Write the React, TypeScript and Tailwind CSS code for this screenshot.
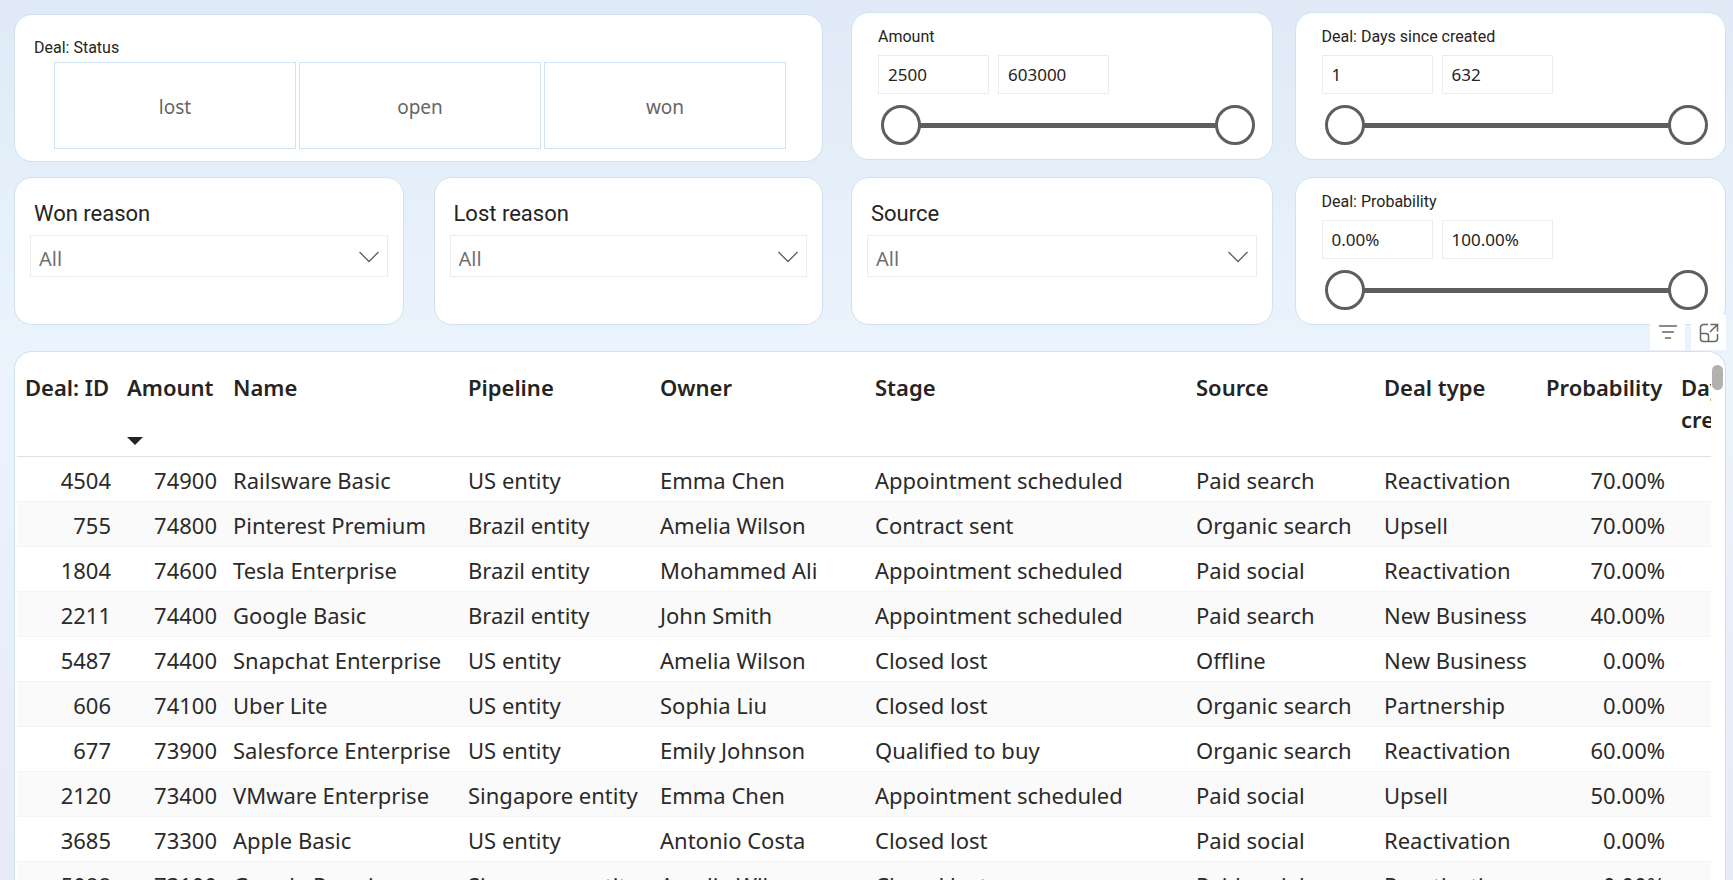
import { useState } from 'react';

type Deal = {
  id: number;
  amount: number;
  name: string;
  pipeline: string;
  owner: string;
  stage: string;
  source: string;
  type: string;
  probability: string;
};

const deals: Deal[] = [
  { id: 4504, amount: 74900, name: 'Railsware Basic', pipeline: 'US entity', owner: 'Emma Chen', stage: 'Appointment scheduled', source: 'Paid search', type: 'Reactivation', probability: '70.00%' },
  { id: 755, amount: 74800, name: 'Pinterest Premium', pipeline: 'Brazil entity', owner: 'Amelia Wilson', stage: 'Contract sent', source: 'Organic search', type: 'Upsell', probability: '70.00%' },
  { id: 1804, amount: 74600, name: 'Tesla Enterprise', pipeline: 'Brazil entity', owner: 'Mohammed Ali', stage: 'Appointment scheduled', source: 'Paid social', type: 'Reactivation', probability: '70.00%' },
  { id: 2211, amount: 74400, name: 'Google Basic', pipeline: 'Brazil entity', owner: 'John Smith', stage: 'Appointment scheduled', source: 'Paid search', type: 'New Business', probability: '40.00%' },
  { id: 5487, amount: 74400, name: 'Snapchat Enterprise', pipeline: 'US entity', owner: 'Amelia Wilson', stage: 'Closed lost', source: 'Offline', type: 'New Business', probability: '0.00%' },
  { id: 606, amount: 74100, name: 'Uber Lite', pipeline: 'US entity', owner: 'Sophia Liu', stage: 'Closed lost', source: 'Organic search', type: 'Partnership', probability: '0.00%' },
  { id: 677, amount: 73900, name: 'Salesforce Enterprise', pipeline: 'US entity', owner: 'Emily Johnson', stage: 'Qualified to buy', source: 'Organic search', type: 'Reactivation', probability: '60.00%' },
  { id: 2120, amount: 73400, name: 'VMware Enterprise', pipeline: 'Singapore entity', owner: 'Emma Chen', stage: 'Appointment scheduled', source: 'Paid social', type: 'Upsell', probability: '50.00%' },
  { id: 3685, amount: 73300, name: 'Apple Basic', pipeline: 'US entity', owner: 'Antonio Costa', stage: 'Closed lost', source: 'Paid social', type: 'Reactivation', probability: '0.00%' },
  { id: 5088, amount: 73100, name: 'Google Premium', pipeline: 'Singapore entity', owner: 'Amelia Wilson', stage: 'Closed lost', source: 'Paid social', type: 'Reactivation', probability: '0.00%' },
];

const card = 'h-[148px] rounded-[18px] border border-[#cfe2ee] bg-white';

function SelectFilter({ id, label }: { id: string; label: string }) {
  return (
    <div className={`${card} min-w-0 flex-1 px-[15px] pt-5`}>
      <label htmlFor={id} className="block px-1 font-['Roboto',sans-serif] text-[22px] leading-8 text-[#252423]">
        {label}
      </label>
      <div className="relative mt-[5px]">
        <select
          id={id}
          className="block h-[42px] w-full appearance-none border border-[#ececec] bg-white px-2 pt-1.5 text-xl leading-8 text-[#707070] outline-none"
        >
          <option>All</option>
        </select>
        <svg className="pointer-events-none absolute top-4 right-[9px] h-3 w-5" viewBox="0 0 20 12" fill="none" stroke="#605e5c" strokeWidth="1.3">
          <path d="M0.5 1 L10 10.5 L19.5 1" />
        </svg>
      </div>
    </div>
  );
}

const thumb =
  'pointer-events-none absolute inset-0 h-10 w-full appearance-none bg-transparent outline-none ' +
  '[&::-webkit-slider-thumb]:pointer-events-auto [&::-webkit-slider-thumb]:size-10 [&::-webkit-slider-thumb]:appearance-none ' +
  '[&::-webkit-slider-thumb]:rounded-full [&::-webkit-slider-thumb]:border-3 [&::-webkit-slider-thumb]:border-[#605e5c] [&::-webkit-slider-thumb]:bg-white';

type RangeProps = { label: string; from: string; to: string; min: number; max: number };

function RangeFilter({ label, from, to, min, max }: RangeProps) {
  const [low, setLow] = useState(min);
  const [high, setHigh] = useState(max);

  return (
    <div className={`${card} pt-3 pr-[17px] pl-[26px]`}>
      <h2 className="font-['Roboto',sans-serif] text-base text-[#252423]">{label}</h2>
      <div className="mt-1.5 flex gap-[9px]">
        <input aria-label={`${label} from`} defaultValue={from} className="h-[39px] w-[111px] border border-[#ececec] px-[9px] text-[17px] text-[#252423] outline-none" />
        <input aria-label={`${label} to`} defaultValue={to} className="h-[39px] w-[111px] border border-[#ececec] px-[9px] text-[17px] text-[#252423] outline-none" />
      </div>
      <div className="relative mt-[11px] ml-[3px] flex h-10 items-center px-5">
        <div className="h-[5px] w-full bg-[#605e5c]"></div>
        <input type="range" aria-label={`${label} minimum`} min={min} max={max} value={low} onChange={(e) => setLow(Number(e.target.value))} className={thumb} />
        <input type="range" aria-label={`${label} maximum`} min={min} max={max} value={high} onChange={(e) => setHigh(Number(e.target.value))} className={thumb} />
      </div>
    </div>
  );
}

export default function App() {
  const [status, setStatus] = useState('');

  return (
    <div className="flex h-screen flex-col overflow-hidden bg-linear-to-b from-[#dfeaf6] via-[#ebf4fd] via-40% to-[#e7eaf7] pt-3 pr-[7px] pl-[14px] font-['Noto_Sans',sans-serif]">
      {/* Filters */}
      <div className="flex gap-7">
        <div className="flex min-w-0 flex-[809] flex-col gap-[15px] pt-0.5">
          <div className={`${card} pt-[21px] pr-9 pl-[19px]`}>
            <h2 className="font-['Roboto',sans-serif] text-base text-[#252423]">Deal: Status</h2>
            <div className="mt-0.5 ml-5 flex gap-[3px]">
              {['lost', 'open', 'won'].map((s) => (
                <button
                  key={s}
                  aria-pressed={status === s}
                  onClick={() => setStatus(status === s ? '' : s)}
                  className="h-[87px] flex-1 border border-[#cfe4ef] bg-white pt-1 text-[19px] text-[#666666] aria-pressed:bg-[#e5f0f8]"
                >
                  {s}
                </button>
              ))}
            </div>
          </div>
          <div className="flex gap-[30px]">
            <SelectFilter id="won-reason" label="Won reason" />
            <SelectFilter id="lost-reason" label="Lost reason" />
          </div>
        </div>

        <div className="flex min-w-0 flex-[875] gap-[22px]">
          <div className="flex min-w-0 flex-[421] flex-col gap-[17px]">
            <RangeFilter label="Amount" from="2500" to="603000" min={2500} max={603000} />
            <div className="flex">
              <SelectFilter id="source" label="Source" />
            </div>
          </div>
          <div className="flex min-w-0 flex-[431] flex-col gap-[17px]">
            <RangeFilter label="Deal: Days since created" from="1" to="632" min={1} max={632} />
            <RangeFilter label="Deal: Probability" from="0.00%" to="100.00%" min={0} max={100} />
          </div>
        </div>
      </div>

      {/* Deals table */}
      <div className="relative mt-[26px] flex min-h-0 flex-1 rounded-t-[18px] border border-b-0 border-[#cfe2ee] bg-white pl-0.5">
        <div className="absolute -right-px bottom-full mb-0.5 flex gap-1.5">
          <button aria-label="Filters" className="flex size-[35px] items-center justify-center bg-white">
            <svg className="size-5" viewBox="0 0 20 20" fill="none" stroke="#666" strokeWidth="1.5" strokeLinecap="round">
              <path d="M1.5 3H18.5M4.5 9H15.5M7.5 15H12.5" />
            </svg>
          </button>
          <button aria-label="Focus mode" className="flex size-[35px] items-center justify-center bg-white">
            <svg className="size-5" viewBox="0 0 20 20" fill="none" stroke="#666" strokeWidth="1.5">
              <path d="M9 1.5H4.5A3 3 0 0 0 1.5 4.5V15.5A3 3 0 0 0 4.5 18.5H15.5A3 3 0 0 0 18.5 15.5V11M1.5 10.5H7A2.5 2.5 0 0 1 9.5 13V18.5M11.5 1.5H18.5V8.5M18.5 1.5L11 9" />
            </svg>
          </button>
        </div>

        <div className="min-w-0 flex-1 overflow-hidden">
          <table className="w-[1820px] table-fixed text-[22px] whitespace-nowrap text-[#2b2a29]">
            <colgroup>
              <col className="w-[102px]" />
              <col className="w-[106px]" />
              <col className="w-[235px]" />
              <col className="w-[192px]" />
              <col className="w-[215px]" />
              <col className="w-[321px]" />
              <col className="w-[188px]" />
              <col className="w-[162px]" />
              <col className="w-[135px]" />
              <col />
            </colgroup>
            <thead>
              <tr className="h-[104px] border-b border-[#e1e1e1] text-left align-top leading-8 text-[#252423] *:px-2 *:pt-[19px] *:font-semibold">
                <th>Deal: ID</th>
                <th aria-sort="descending">
                  Amount
                  <svg className="mt-[34px] h-2 w-4" viewBox="0 0 16 8" fill="#252423">
                    <path d="M0 0H16L8 8Z" />
                  </svg>
                </th>
                <th>Name</th>
                <th>Pipeline</th>
                <th>Owner</th>
                <th>Stage</th>
                <th>Source</th>
                <th>Deal type</th>
                <th>Probability</th>
                <th className="whitespace-normal">Days since created</th>
              </tr>
            </thead>
            <tbody>
              {deals.map((deal) => (
                <tr key={deal.id} className="h-[45px] border-b border-[#f3f3f3] leading-8 even:bg-[#fafafa] *:px-2 *:pt-0.5">
                  <td className="text-right">{deal.id}</td>
                  <td className="text-right">{deal.amount}</td>
                  <td>{deal.name}</td>
                  <td>{deal.pipeline}</td>
                  <td>{deal.owner}</td>
                  <td>{deal.stage}</td>
                  <td>{deal.source}</td>
                  <td>{deal.type}</td>
                  <td className="text-right">{deal.probability}</td>
                  <td></td>
                </tr>
              ))}
            </tbody>
          </table>
        </div>

        {/* Scrollbar */}
        <div className="w-[14px] pt-[13px] pl-px">
          <div className="h-[25px] w-[11px] rounded-full bg-[#b3b1af]"></div>
        </div>
      </div>
    </div>
  );
}
